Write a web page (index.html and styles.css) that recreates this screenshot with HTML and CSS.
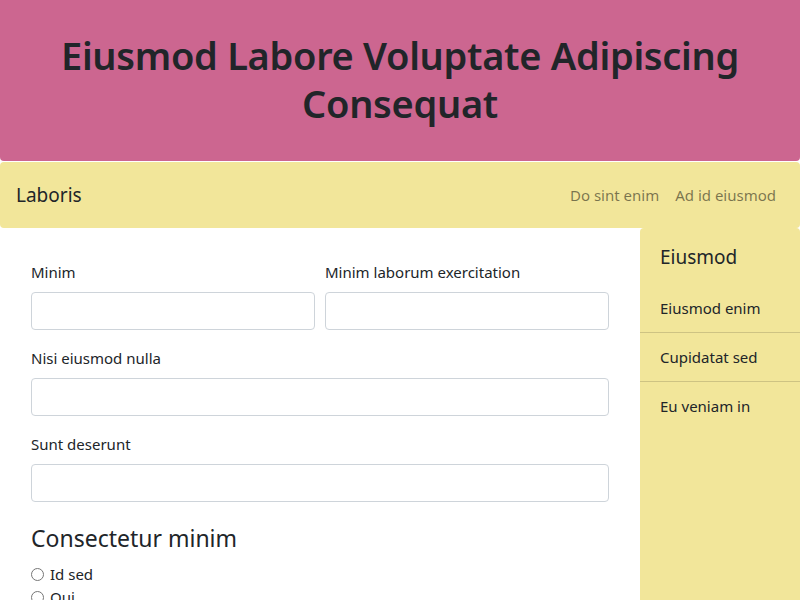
FILE: index.html
```html
<!DOCTYPE html>
<html>
<head>
<meta charset="utf-8">
<link rel="stylesheet" href="styles.css">
</head>
<body>
<header class="hero">
  <h1 class="hero-title">Eiusmod Labore Voluptate Adipiscing Consequat</h1>
</header>
<nav class="navbar">
  <span class="brand">Laboris</span>
  <div class="nav-links">
    <a class="nav-link">Do sint enim</a>
    <a class="nav-link">Ad id eiusmod</a>
  </div>
</nav>
<div class="layout">
  <main class="main">
    <form class="form">
      <div class="row">
        <div class="field">
          <label class="label">Minim</label>
          <input class="input" type="text">
        </div>
        <div class="field">
          <label class="label">Minim laborum exercitation</label>
          <input class="input" type="text">
        </div>
      </div>
      <div class="field">
        <label class="label">Nisi eiusmod nulla</label>
        <input class="input" type="text">
      </div>
      <div class="field">
        <label class="label">Sunt deserunt</label>
        <input class="input" type="text">
      </div>
      <h2 class="section-title">Consectetur minim</h2>
      <div class="radios">
        <label class="radio"><input type="radio" name="r"> Id sed</label>
        <label class="radio"><input type="radio" name="r"> Qui</label>
      </div>
    </form>
  </main>
  <aside class="sidebar">
    <h3 class="side-title">Eiusmod</h3>
    <ul class="side-list">
      <li class="side-item">Eiusmod enim</li>
      <li class="side-item">Cupidatat sed</li>
      <li class="side-item">Eu veniam in</li>
    </ul>
  </aside>
</div>
</body>
</html>
```
FILE: styles.css
```css
* { box-sizing: border-box; }
html, body { margin: 0; padding: 0; }
body {
  font-family: "Noto Sans", "Open Sans", sans-serif;
  color: #212529;
  background: #fff;
  width: 800px;
  height: 600px;
  overflow: hidden;
}
.hero {
  background: #cc6690;
  height: 161px;
  border-radius: 0 0 4px 4px;
  display: flex;
  align-items: center;
  justify-content: center;
  padding: 0 40px 4px;
}
.hero-title {
  margin: 0;
  font-size: 38px;
  font-weight: 600;
  line-height: 48px;
  text-align: center;
  letter-spacing: -0.3px;
}
.navbar {
  margin-top: 1px;
  background: #f2e69a;
  height: 66px;
  border-radius: 4px;
  display: flex;
  align-items: center;
  justify-content: space-between;
  padding: 0 16px;
}
.brand { font-size: 19px; }
.nav-links { display: flex; gap: 16px; padding-right: 8px; }
.nav-link { font-size: 15px; color: rgba(0,0,0,0.5); }
.layout { display: flex; }
.main { width: 640px; padding: 32px 31px 0; }
.form { display: flex; flex-direction: column; }
.row { display: flex; gap: 10px; }
.row .field { flex: 1; }
.field { margin-bottom: 16px; }
.label { display: block; font-size: 15px; margin-bottom: 8px; line-height: 24px; }
.input {
  display: block;
  width: 100%;
  height: 38px;
  border: 1px solid #ced4da;
  border-radius: 4px;
  background: #fff;
}
.section-title { font-size: 23px; font-weight: 400; margin: 6px 0 10px; line-height: 29px; }
.radios { display: flex; flex-direction: column; }
.radio { font-size: 15px; display: flex; align-items: center; gap: 4px; line-height: 23px; }
.radio input { margin: 0 2px 0 0; width: 13px; height: 13px; }
.sidebar {
  width: 160px;
  height: 372px;
  background: #f2e69a;
  border-radius: 4px 4px 0 0;
  padding: 15px 0 0;
}
.side-title { font-size: 19px; font-weight: 400; margin: 0 20px 13px; line-height: 28px; }
.side-list { list-style: none; margin: 0; padding: 0; }
.side-item {
  font-size: 15px;
  padding: 13px 20px;
  line-height: 22px;
  border-bottom: 1px solid rgba(0,0,0,0.15);
}
.side-item:last-child { border-bottom: none; }
```
